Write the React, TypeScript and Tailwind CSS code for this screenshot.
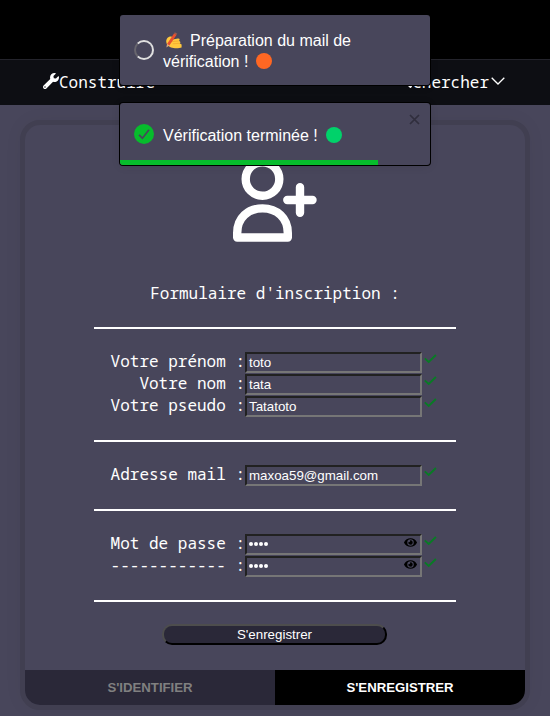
import React from "react";
import { FaEye, FaSearch, FaWrench } from "react-icons/fa";

const sans = "font-['Liberation_Sans',Arial,sans-serif]";

function Check() {
  return (
    <svg className="mt-[2px] ml-[2px] h-[10px] w-[13px] shrink-0" viewBox="0 0 13 10">
      <path d="M0.8 4.4 L4.7 7.9 L11.9 1" fill="none" stroke="#087c24" strokeWidth="1.9" />
    </svg>
  );
}

function Field({ label, value, password = false }: { label: string; value: string; password?: boolean }) {
  return (
    <div className="flex h-[22px] items-start">
      <div className="w-[151px] text-right leading-[18px] whitespace-pre">{label}</div>
      <div
        className={`${sans} flex h-[21px] w-[177px] items-center justify-between border-2 border-t-[#212121] border-r-[#767676] border-b-[#767676] border-l-[#212121] px-[2px] text-[13.333px] leading-[15px]`}
      >
        {password ? (
          <span className="mt-[-1px] flex gap-[1px]">
            {value.split("").map((_, i) => (
              <i key={i} className="size-[4px] rounded-full bg-white" />
            ))}
          </span>
        ) : (
          <span>{value}</span>
        )}
        {password && <FaEye className="mt-[-4px] mr-[1px] size-[13px] text-black" />}
      </div>
      <Check />
    </div>
  );
}

function Rule() {
  return <div className="h-[2px] shrink-0 bg-white" />;
}

function WritingHand() {
  return (
    <svg className="h-[17px] w-[17px]" viewBox="0 0 17 17">
      <path
        d="M1.2 9.6 C1.2 6.5 3.5 4.6 6 4.6 C7.8 4.6 8.2 6 7.6 7.4 L13 6.6 C15 6.4 15.2 8.6 13.6 9 C15.6 9 16 10.8 14.6 11.3 L16.6 12.4 V15.4 C14 16.4 9 16.4 6 15.4 C3.5 14.4 1.2 12.6 1.2 9.6Z"
        fill="#ffc83d"
      />
      <path d="M7.2 9.6 L13.4 9 M7.8 11.8 L14.4 11.3" fill="none" stroke="#f0a42b" strokeWidth="0.7" />
      <path d="M9 1.4 L11.6 2.8 L4.4 13.4 L2 12Z" fill="#e8502f" />
      <path d="M9 1.4 L9.8 0.3 L12.3 1.7 L11.6 2.8Z" fill="#a05a4a" />
      <path d="M2 12 L4.4 13.4 L1.4 15.6Z" fill="#e0a87e" />
    </svg>
  );
}

export default function App() {
  return (
    <div className="relative h-[716px] w-[550px] overflow-hidden bg-[#48465b] font-['Noto_Sans_Mono','DejaVu_Sans_Mono',monospace] text-[16px] text-white">
      <div className="h-[59px] bg-black" />
      <header className="flex h-[46px] items-center justify-between border-t border-[#24242c] bg-[#0d0e13] pr-[45px] pl-[43px]">
        <div className="flex items-center">
          <FaWrench className="mt-[-4px] size-4" />
          <span className="mb-[2px] leading-5">Construire</span>
        </div>
        <div className="flex items-center">
          <FaSearch className="mt-[-6px] size-4" />
          <span className="mb-[2px] leading-5">Chercher</span>
          <svg className="mt-[-3px] ml-[2px] h-[8px] w-[14px]" viewBox="0 0 14 8">
            <path d="M0.7 0.8 L7 7 L13.3 0.8" fill="none" stroke="white" strokeWidth="1.3" />
          </svg>
        </div>
      </header>

      <main className="mx-[20px] mt-[15px] flex h-[590px] w-[510px] flex-col overflow-hidden rounded-[20px] border-5 border-[#413f51] bg-[#48465b] shadow-[0_0_20px_rgba(40,38,55,0.04)]">
        <div className="flex h-[545px] flex-col px-[69px]">
          <svg className="mt-[33px] ml-[137px] h-[88px] w-[88px] shrink-0" viewBox="231 158 88 88">
            <g fill="none" stroke="white" strokeWidth="8.4">
              <circle cx="262.5" cy="179" r="16.8" />
              <path d="M237.2 237.5 V233 C237.2 218 248 208.4 262.5 208.4 C277 208.4 287.8 218 287.8 233 V237.5 Z" strokeLinejoin="round" />
              <path d="M287.3 200 H312.5 M300 187.3 V212.7" strokeLinecap="round" />
            </g>
          </svg>
          <h1 className="mt-[37px] h-5 text-center leading-5 whitespace-pre">Formulaire d'inscription :</h1>
          <div className="h-[24px]" />
          <Rule />
          <div className="mt-[23px] mb-[22px]">
            <Field label="Votre prénom :" value="toto" />
            <Field label="Votre nom :" value="tata" />
            <Field label="Votre pseudo :" value="Tatatoto" />
          </div>
          <Rule />
          <div className="my-[23px] h-[21px]">
            <Field label="Adresse mail :" value="maxoa59@gmail.com" />
          </div>
          <Rule />
          <div className="mt-[23px] mb-[22px]">
            <Field label="Mot de passe :" value="toto" password />
            <Field label="------------ :" value="toto" password />
          </div>
          <Rule />
          <button
            className={`${sans} mt-[22px] ml-[68px] flex h-[21px] w-[225px] items-center justify-center rounded-[10px] border-2 border-t-[#4d4d4d] border-r-black border-b-black border-l-[#4d4d4d] bg-[#2a2838] text-[13.333px] leading-[15px]`}
          >
            S'enregistrer
          </button>
        </div>
        <nav className={`${sans} grid h-[35px] grid-cols-2 text-[13.2px] font-bold`}>
          <div className="flex items-center justify-center bg-[#2a2838] text-[#808080]">S'IDENTIFIER</div>
          <div className="flex items-center justify-center bg-black">S'ENREGISTRER</div>
        </nav>
      </main>

      <div className={`${sans} absolute top-[15px] left-[120px] flex w-[310px] flex-col gap-[18px] leading-[21px]`}>
        <div className="flex h-[70px] items-center rounded-[3px] bg-[#48465b] pl-[14px] shadow-[0_0_0_1px_black,0_1px_10px_rgba(0,0,0,0.1)]">
          <div className="size-5 shrink-0 rounded-full border-2 border-[#e0e0e0] border-l-[#68666e]" />
          <div className="mt-px ml-[9px]">
            <div className="flex items-center whitespace-pre">
              <span className="ml-[2px]"><WritingHand /></span>
              <span className="ml-[8px]">Préparation du mail de</span>
            </div>
            <div className="flex items-center">
              vérification !<span className="ml-[8px] size-4 rounded-full bg-[#ff6723]" />
            </div>
          </div>
        </div>
        <div className="flex h-[62px] flex-col overflow-hidden rounded-[3px] bg-[#48465b] shadow-[0_0_0_1px_black,0_1px_10px_rgba(0,0,0,0.1)]">
          <div className="flex h-[57px] items-start pl-[14px]">
            <svg className="mt-[21px] size-5" viewBox="0 0 20 20">
              <circle cx="10" cy="10" r="10" fill="#07bc2c" />
              <path d="M5 10.8 L8.4 14.2 L15 5.8" fill="none" stroke="#48465b" strokeWidth="1.7" />
            </svg>
            <span className="mt-[22px] ml-[9px] whitespace-pre">Vérification terminée !</span>
            <span className="mt-[24px] ml-[8px] size-4 rounded-full bg-[#00d26a]" />
            <svg className="mt-[11px] mr-[10px] ml-auto size-[11px]" viewBox="0 0 11 11">
              <path d="M1 1 L10 10 M10 1 L1 10" stroke="#302e3d" strokeWidth="1.7" />
            </svg>
          </div>
          <div className="h-[5px] w-[258px] bg-[#07bc2c]" />
        </div>
      </div>
    </div>
  );
}
